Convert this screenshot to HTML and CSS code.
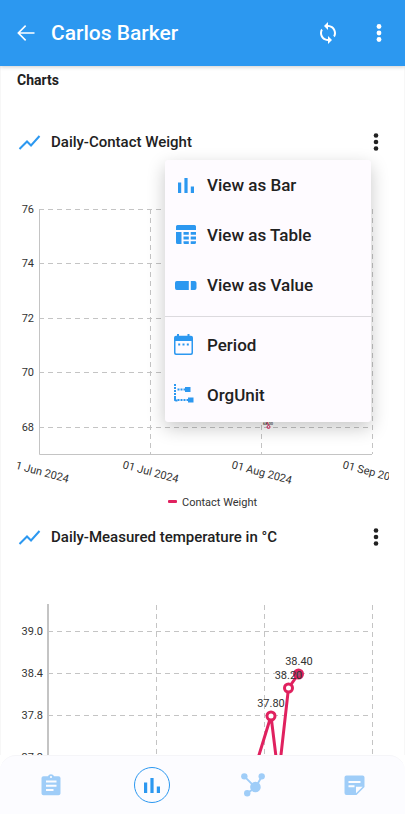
FILE: index.html
```html
<!DOCTYPE html>
<html lang="en">
<head>
<meta charset="utf-8">
<meta name="viewport" content="width=device-width, initial-scale=1">
<title>Carlos Barker</title>
<link rel="stylesheet" href="styles.css">
</head>
<body>
<div class="app">
  <header class="topbar">
    <a class="back" href="#" aria-label="Back">
      <svg class="icon" viewBox="0 0 24 24"><path d="M20.500 11.200H6.200l6-6L11.100 4.100 3.200 12l7.900 7.900 1.100-1.100-6-6H20.500z"/></svg>
    </a>
    <h1 class="title">Carlos Barker</h1>
    <button class="tool" aria-label="Sync">
      <svg class="icon" viewBox="0 0 24 24"><path d="M12 4V1L8 5l4 4V6c3.310 0 6 2.690 6 6 0 1.010-.250 1.970-.700 2.800l1.460 1.460C19.540 15.030 20 13.570 20 12c0-4.420-3.580-8-8-8zm0 14c-3.310 0-6-2.690-6-6 0-1.010.250-1.970.700-2.800L5.240 7.740C4.460 8.970 4 10.430 4 12c0 4.420 3.580 8 8 8v3l4-4-4-4v3z"/></svg>
    </button>
    <button class="tool" aria-label="More options">
      <svg class="icon" viewBox="0 0 24 24"><circle cx="12" cy="5.500" r="2.400"/><circle cx="12" cy="12" r="2.400"/><circle cx="12" cy="18.500" r="2.400"/></svg>
    </button>
  </header>

  <main class="content">
    <h2 class="heading">Charts</h2>

    <section class="card">
      <div class="card-head">
        <svg class="icon trend" viewBox="0 0 24 24"><path d="M2.500 19 10 11.500l4 4L22.500 6"/></svg>
        <h3 class="card-title">Daily-Contact Weight</h3>
        <button class="more" aria-label="Chart options">
          <svg class="icon" viewBox="0 0 24 24"><circle cx="12" cy="5.500" r="2.300"/><circle cx="12" cy="12" r="2.300"/><circle cx="12" cy="18.500" r="2.300"/></svg>
        </button>
      </div>
      <svg class="chart" viewBox="17 166 372 347" role="img" aria-label="Contact Weight by day">
        <g class="grid">
          <path d="M39 209.500H372M39 263.500H372M39 318.500H372M39 372.500H372M39 427.500H372"/>
          <path d="M39.500 209V454M150.500 209V454M261.500 209V454M372.500 209V454"/>
        </g>
        <path class="axis" d="M39.500 209V454.500H372"/>
        <g class="label end">
          <text x="34" y="213">76</text>
          <text x="34" y="267">74</text>
          <text x="34" y="322">72</text>
          <text x="34" y="376">70</text>
          <text x="34" y="431">68</text>
        </g>
        <g class="label">
          <text transform="translate(9 467) rotate(15)">01 Jun 2024</text>
          <text transform="translate(122 468) rotate(15)">01 Jul 2024</text>
          <text transform="translate(231 468) rotate(15)">01 Aug 2024</text>
          <text transform="translate(342 468) rotate(15)">01 Sep 2024</text>
          <text x="182" y="506">Contact Weight</text>
        </g>
        <rect class="swatch" x="168" y="500" width="9" height="3" rx="1"/>
        <g class="tiny"><text x="263" y="425">68.00</text></g>
        <path class="mini" d="M267 422l1.500 3"/>
        <circle class="mini" cx="268.500" cy="427" r="1.500"/>
      </svg>

      <div class="menu" role="menu">
        <button class="item" role="menuitem">
          <svg class="icon" viewBox="0 0 24 24"><path d="M4 9.500h3.200V20H4zM10.400 5h3.200v15h-3.200zM16.800 13.500H20V20h-3.200z"/></svg>
          View as Bar
        </button>
        <button class="item" role="menuitem">
          <svg class="icon" viewBox="0 0 24 24"><path d="M3.500 2h17A1.500 1.500 0 0 1 22 3.500V7H2V3.500A1.500 1.500 0 0 1 3.500 2zM2 9h5.500v12h-4A1.500 1.500 0 0 1 2 19.500zM9.500 9h5.300v2.800H9.500zM16.700 9H22v2.800h-5.300zM9.500 13.600h5.300v2.800H9.500zM16.700 13.600H22v2.800h-5.300zM9.500 18.200h5.300V21h-4.200a1.100 1.100 0 0 1-1.100-1.100zM16.700 18.200H22v1.300a1.500 1.500 0 0 1-1.500 1.500h-3.800z"/></svg>
          View as Table
        </button>
        <button class="item" role="menuitem">
          <svg class="icon" viewBox="0 0 24 24"><path d="M2.800 8h12v9h-12A2 2 0 0 1 1 15v-5a2 2 0 0 1 1.800-2zM16.800 8h3.700a2 2 0 0 1 2 2v5a2 2 0 0 1-2 2h-3.700z"/></svg>
          View as Value
        </button>
        <hr class="rule">
        <button class="item filter" role="menuitem">
          <svg class="icon" viewBox="0 0 24 24"><path fill-rule="evenodd" d="M6 1h2v1.800h8.500V1h2v1.800H20a2 2 0 0 1 2 2V20a2 2 0 0 1-2 2H5a2 2 0 0 1-2-2V4.800a2 2 0 0 1 2-2h1zM4.500 8v11.500a1 1 0 0 0 1 1h14a1 1 0 0 0 1-1V8zM7.200 10.500h2v2h-2zM11.500 10.500h2v2h-2zM15.800 10.500h2v2h-2z"/></svg>
          Period
        </button>
        <button class="item filter" role="menuitem">
          <svg class="icon" viewBox="0 0 24 24"><path class="dots" d="M4 1V17.500M6.500 6.500H14M6.500 17H17"/><path d="M14 4h5.500v5H14zM17 14.500h5.500v5H17zM3 15h2v1.500h1.500v2H5a2 2 0 0 1-2-2z"/></svg>
          OrgUnit
        </button>
      </div>
    </section>

    <section class="card">
      <div class="card-head">
        <svg class="icon trend" viewBox="0 0 24 24"><path d="M2.500 19 10 11.500l4 4L22.500 6"/></svg>
        <h3 class="card-title">Daily-Measured temperature in °C</h3>
        <button class="more" aria-label="Chart options">
          <svg class="icon" viewBox="0 0 24 24"><circle cx="12" cy="5.500" r="2.300"/><circle cx="12" cy="12" r="2.300"/><circle cx="12" cy="18.500" r="2.300"/></svg>
        </button>
      </div>
      <svg class="chart" viewBox="17 561 372 347" role="img" aria-label="Measured temperature by day">
        <g class="grid">
          <path d="M48 631.500H372M48 673.500H372M48 715.500H372M48 757.500H372"/>
          <path d="M156.500 605V850M264.500 605V850M372.500 605V850"/>
        </g>
        <path class="axis wide" d="M48 604V850"/>
        <g class="label end">
          <text x="43" y="635">39.0</text>
          <text x="43" y="677">38.4</text>
          <text x="43" y="719">37.8</text>
          <text x="43" y="761">37.2</text>
        </g>
        <path class="series" d="M247 794 271 716 278.500 777 288.500 688 298.500 674"/>
        <g class="point">
          <circle cx="271" cy="716" r="4"/>
          <circle cx="288.500" cy="688" r="4"/>
          <circle class="last" cx="298.500" cy="674" r="4"/>
        </g>
        <g class="label mid">
          <text x="271" y="707">37.80</text>
          <text x="288.500" y="679">38.20</text>
          <text x="299" y="665">38.40</text>
        </g>
      </svg>
    </section>
  </main>

  <nav class="tabs">
    <a class="tab" href="#" aria-label="Details">
      <svg class="icon" viewBox="0 0 24 24"><path d="M19.500 3.300h-4.500C14.500 2 13.400 1.300 12 1.300S9.500 2 9 3.300H4.500c-1.100 0-2 .900-2 2v15c0 1.100.900 2 2 2h15c1.100 0 2-.900 2-2v-15c0-1.100-.900-2-2-2zM12 3c.600 0 1 .400 1 1s-.400 1-1 1-1-.400-1-1 .400-1 1-1zm2.500 15H7v-2h7.500zm3-4.200H7v-2h10.500zm0-4.200H7v-2h10.500z"/></svg>
    </a>
    <a class="tab active" href="#" aria-label="Charts" aria-current="page">
      <svg class="icon" viewBox="0 0 24 24"><path d="M4 9.500h3.200V20H4zM10.400 5h3.200v15h-3.200zM16.800 13.500H20V20h-3.200z"/></svg>
    </a>
    <a class="tab" href="#" aria-label="Relationships">
      <svg class="icon large" viewBox="0 0 28 28"><path class="links" d="M5 5 16 16 22.500 5M16 16 7.500 22"/><circle cx="4.500" cy="4.500" r="3.300"/><circle cx="22.500" cy="4.500" r="3.300"/><circle cx="16" cy="15.500" r="5.500"/><circle cx="7.500" cy="22" r="3.300"/></svg>
    </a>
    <a class="tab" href="#" aria-label="Notes">
      <svg class="icon" viewBox="0 0 24 24"><path fill-rule="evenodd" d="M4.500 2.500h16a2 2 0 0 1 2 2V14l-8 8h-10a2 2 0 0 1-2-2V4.500a2 2 0 0 1 2-2zM6.500 8v2h12V8zM6.500 12.200v2h6v-2zM14 20.200l6.700-6.500H14z"/></svg>
    </a>
  </nav>
</div>
</body>
</html>
```
FILE: styles.css
```css
* {
  box-sizing: border-box;
}

body {
  margin: 0;
  background: #fff;
  color: #212121;
  font-family: Roboto, "Liberation Sans", sans-serif;
}

a {
  color: inherit;
}

button {
  padding: 0;
  border: 0;
  background: none;
  color: inherit;
  font: inherit;
}

.app {
  display: flex;
  flex-direction: column;
  height: 100vh;
  overflow: hidden;
}

.icon {
  display: block;
  flex: none;
  width: 24px;
  height: 24px;
  fill: currentColor;
}

.topbar {
  z-index: 1;
  display: flex;
  flex: none;
  align-items: center;
  gap: 27px;
  height: 66px;
  padding: 0 14px;
  background: #2c98f0;
  box-shadow: 0 1px 4px rgba(0, 0, 0, 0.2);
  color: #fff;
}

.title {
  flex: 1;
  margin: 0 0 0 -14px;
  font-size: 21px;
  font-weight: 500;
  line-height: 28px;
}

.content {
  flex: 1;
  min-height: 0;
  overflow: hidden;
  border: 0 solid #f7f7f7;
  border-width: 0 1px;
}

.heading {
  height: 52px;
  margin: 0;
  padding: 4px 16px 0;
  font-size: 14px;
  font-weight: 700;
  line-height: 20px;
}

.card {
  position: relative;
}

.card-head {
  display: flex;
  align-items: center;
  gap: 10px;
  height: 48px;
  padding: 0 16px;
}

.card-title {
  flex: 1;
  margin: 0;
  font-size: 15px;
  font-weight: 500;
  line-height: 20px;
}

.trend {
  fill: none;
  stroke: #2c98f0;
  stroke-width: 2;
}

.chart {
  display: block;
  width: calc(100% - 31px);
  height: auto;
  margin-left: 16px;
}

.grid {
  fill: none;
  stroke: #c4c4c4;
  stroke-dasharray: 5 4;
}

.axis {
  fill: none;
  stroke: #c4c4c4;
}

.wide {
  stroke-width: 2;
}

.label {
  fill: #333;
  font-size: 11px;
}

.end {
  text-anchor: end;
}

.mid {
  text-anchor: middle;
}

.swatch {
  fill: #e0215f;
}

.tiny {
  font-size: 4px;
}

.mini {
  fill: none;
  stroke: #e0215f;
}

.series {
  fill: none;
  stroke: #e0215f;
  stroke-width: 3;
}

.point {
  fill: #fff;
  stroke: #e0215f;
  stroke-width: 3;
}

.last {
  fill: #b5466f;
}

.menu {
  position: absolute;
  top: 42px;
  right: 33px;
  width: 206px;
  padding-bottom: 2px;
  border-radius: 3px;
  background: #fefbff;
  box-shadow: 0 6px 18px rgba(0, 0, 0, 0.22);
}

.item {
  display: flex;
  align-items: center;
  gap: 9px;
  width: 100%;
  height: 50px;
  padding-left: 9px;
  font-size: 17px;
  font-weight: 500;
  text-align: left;
}

.item .icon {
  color: #2c98f0;
}

.filter {
  gap: 12px;
  padding-left: 6px;
}

.rule {
  height: 1px;
  margin: 6px 0 3px;
  border: 0;
  background: #dcdade;
}

.dots {
  fill: none;
  stroke: currentColor;
  stroke-width: 2;
  stroke-dasharray: 2 1;
}

.tabs {
  display: grid;
  flex: none;
  grid-template-columns: repeat(4, 1fr);
  place-items: center;
  height: 59px;
  border-top: 1px solid #f5f5f8;
  border-radius: 16px 16px 0 0;
  background: #fcfcff;
}

.tab {
  display: grid;
  place-items: center;
  width: 36px;
  height: 36px;
  color: #9fcdf8;
}

.active {
  border: 1px solid #2c98f0;
  border-radius: 50%;
  color: #2c98f0;
}

.large {
  width: 27px;
  height: 27px;
}

.links {
  fill: none;
  stroke: currentColor;
  stroke-width: 2;
}
```
